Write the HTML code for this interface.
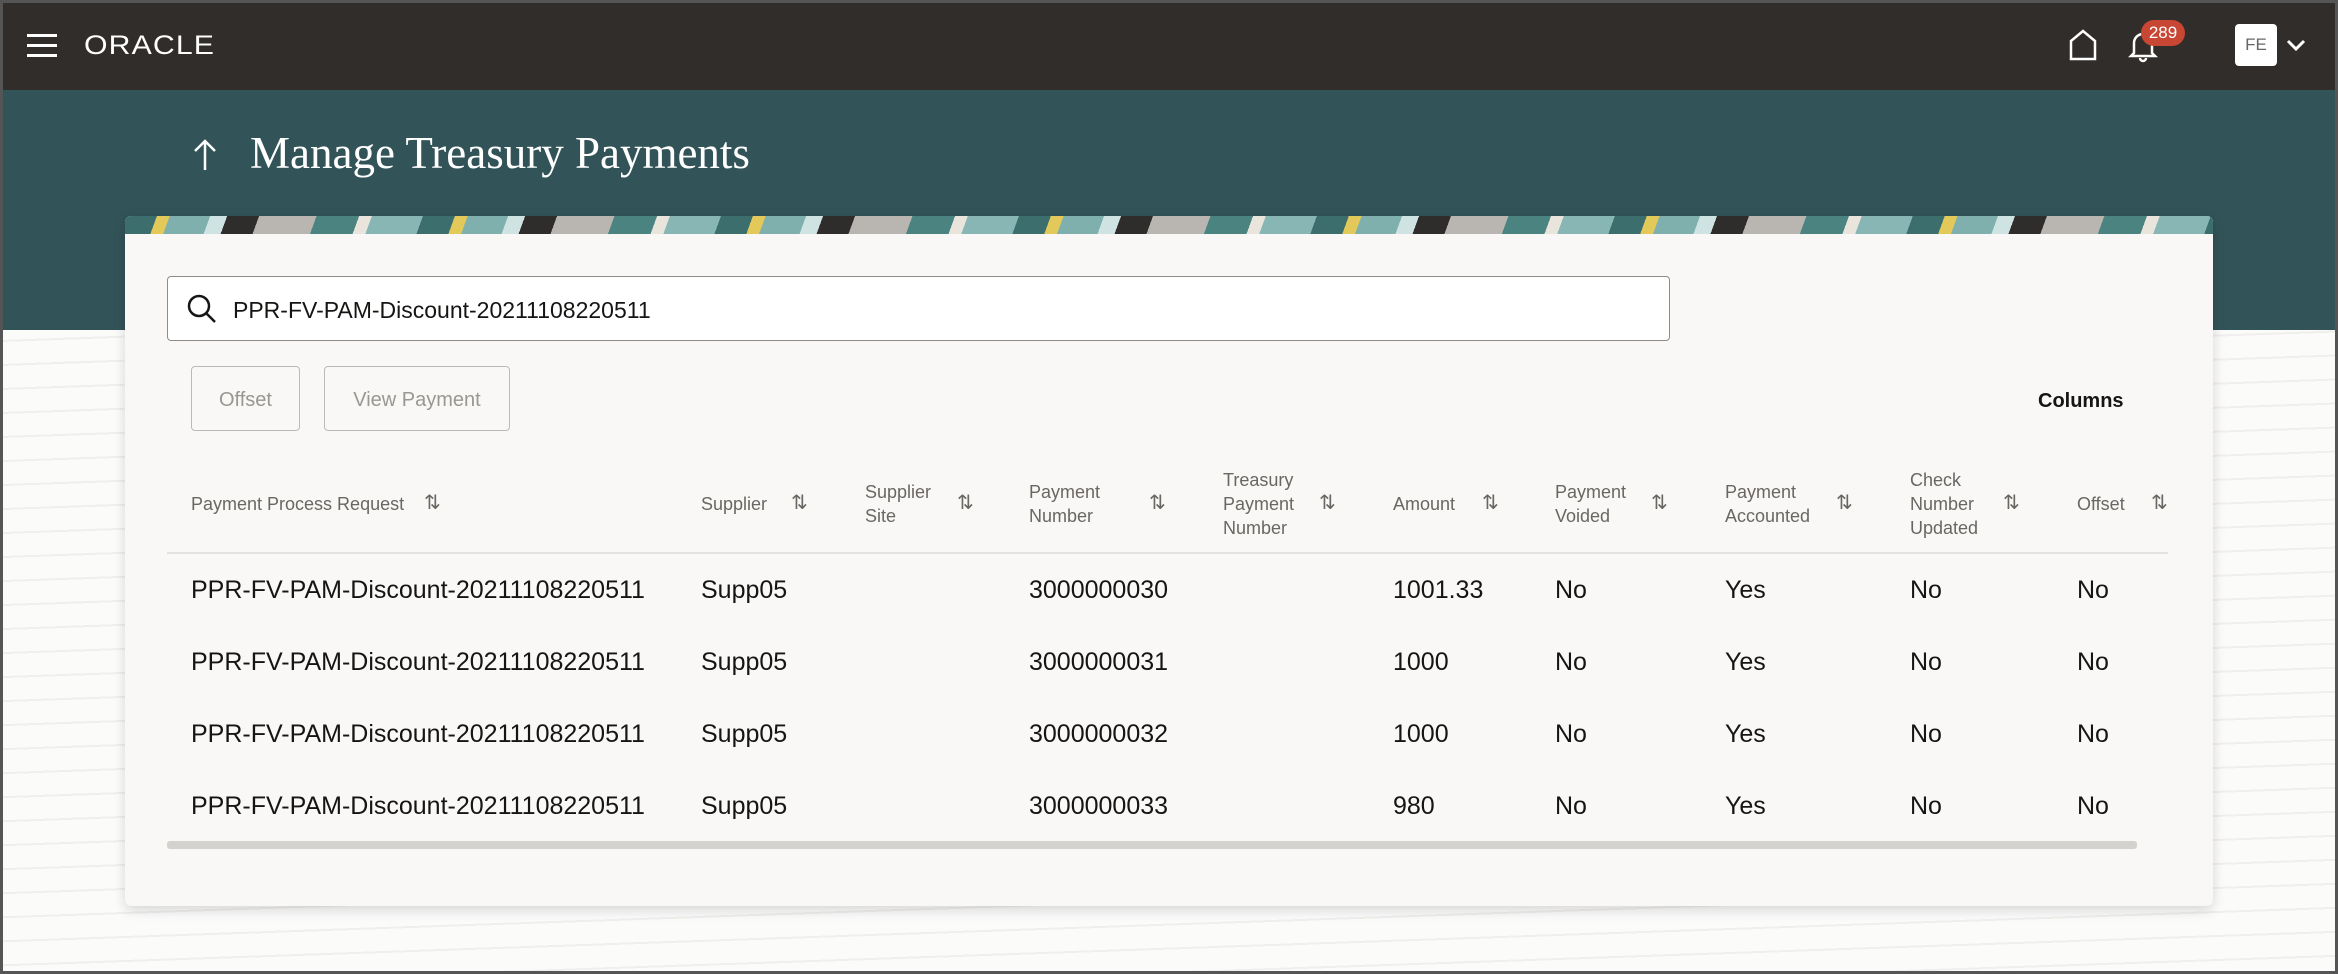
<!DOCTYPE html>
<html><head><meta charset="utf-8"><style>
*{margin:0;padding:0;box-sizing:border-box}
body{width:2338px;height:974px;overflow:hidden;position:relative;font-family:"Liberation Sans",sans-serif;background:#f7f6f4;}
.frame{position:absolute;left:0;top:0;width:2338px;height:974px;border:3px solid #555;z-index:9;pointer-events:none}
.wave{position:absolute;left:0;top:330px;width:2338px;height:644px;background:repeating-linear-gradient(178deg,#fbfbfa 0 10px,#f0efed 10px 12px,#fbfbfa 12px 24px);}
.hdr{position:absolute;left:0;top:0;width:2338px;height:90px;background:#312d2a}
.teal{position:absolute;left:0;top:90px;width:2338px;height:240px;background:#325358}
.card{position:absolute;left:125px;top:216px;width:2088px;height:690px;background:#f9f8f6;border-radius:6px;overflow:hidden;box-shadow:0 4px 12px rgba(0,0,0,.15)}
.banner{height:18px;background:repeating-linear-gradient(110deg,#3c6e6e 0 30px,#e3c95a 30px 42px,#7fb0ad 42px 80px,#cfe3e2 80px 96px,#2f2d2c 96px 126px,#b9b5b0 126px 180px,#4b8380 180px 220px,#e9e5dc 220px 232px,#88b6b4 232px 280px)}
.search{position:absolute;left:42px;top:60px;width:1503px;height:65px;background:#fff;border:1.5px solid #8f8c88;border-radius:4px}
.search span{position:absolute;left:65px;top:20px;font-size:23px;color:#161513}
.btn{position:absolute;top:150px;height:65px;border:1.5px solid #bdbab6;border-radius:4px;color:#9a9793;font-size:20px;text-align:center;line-height:66px}
.th{position:absolute;font-size:18px;color:#6a6763;line-height:24px}
.si{position:absolute;font-size:20px;color:#6a6763}
.td{position:absolute;font-size:25px;color:#161513}
</style></head><body>
<div class="frame"></div>
<div class="wave"></div>
<div class="hdr">
 <div style="position:absolute;left:27px;top:34px;width:30px;height:3px;background:#fff;box-shadow:0 10px 0 #fff,0 20px 0 #fff"></div>
 <div style="position:absolute;left:84px;top:30px;font-size:27px;color:#fff;letter-spacing:1px;transform:scaleX(1.12);transform-origin:left">ORACLE</div>
 <svg style="position:absolute;left:2068px;top:29px" width="30" height="32" viewBox="0 0 30 32"><path d="M3 30V12L15 2 27 12V30Z" fill="none" stroke="#fff" stroke-width="2.5"/></svg>
 <svg style="position:absolute;left:2128px;top:29px" width="30" height="34" viewBox="0 0 30 34"><path d="M6 24V14a9 9 0 0 1 18 0V24l3 3H3Z M12 29a3 3 0 0 0 6 0" fill="none" stroke="#fff" stroke-width="2.5"/></svg>
 <div style="position:absolute;left:2141px;top:20px;width:44px;height:26px;border-radius:13px;background:#c74634;color:#fff;font-size:17px;text-align:center;line-height:26px">289</div>
 <div style="position:absolute;left:2235px;top:24px;width:42px;height:42px;border-radius:4px;background:#fff;color:#6a6763;font-size:17px;text-align:center;line-height:42px">FE</div>
 <svg style="position:absolute;left:2286px;top:38px" width="20" height="14" viewBox="0 0 20 14"><path d="M2 3l8 8 8-8" fill="none" stroke="#fff" stroke-width="3"/></svg>
</div>
<div class="teal">
 <svg style="position:absolute;left:193px;top:48px" width="24" height="34" viewBox="0 0 24 34"><path d="M12 32V3M2 13L12 3l10 10" fill="none" stroke="#fff" stroke-width="2.5"/></svg>
 <div style="position:absolute;left:250px;top:37px;font-family:'Liberation Serif',serif;font-size:45px;color:#fff">Manage Treasury Payments</div>
</div>
<div class="card">
 <div class="banner"></div>
 <div class="search"><svg style="position:absolute;left:18px;top:16px" width="32" height="32" viewBox="0 0 32 32"><circle cx="13" cy="13" r="10" fill="none" stroke="#161513" stroke-width="2.5"/><path d="M20 20l9 9" stroke="#161513" stroke-width="2.5"/></svg><span>PPR-FV-PAM-Discount-20211108220511</span></div>
 <div class="btn" style="left:66px;width:109px">Offset</div>
 <div class="btn" style="left:199px;width:186px">View Payment</div>
 <div style="position:absolute;left:1913px;top:174px;font-size:20px;font-weight:bold;color:#161513">Columns</div>
 <div class="th" style="left:66px;top:276px">Payment Process Request</div>
 <div class="th" style="left:576px;top:276px">Supplier</div>
 <div class="th" style="left:740px;top:264px">Supplier<br>Site</div>
 <div class="th" style="left:904px;top:264px">Payment<br>Number</div>
 <div class="th" style="left:1098px;top:252px">Treasury<br>Payment<br>Number</div>
 <div class="th" style="left:1268px;top:276px">Amount</div>
 <div class="th" style="left:1430px;top:264px">Payment<br>Voided</div>
 <div class="th" style="left:1600px;top:264px">Payment<br>Accounted</div>
 <div class="th" style="left:1785px;top:252px">Check<br>Number<br>Updated</div>
 <div class="th" style="left:1952px;top:276px">Offset</div>
 <div class="si" style="left:299px;top:274px">⇅</div><div class="si" style="left:666px;top:274px">⇅</div><div class="si" style="left:832px;top:274px">⇅</div><div class="si" style="left:1024px;top:274px">⇅</div><div class="si" style="left:1194px;top:274px">⇅</div><div class="si" style="left:1357px;top:274px">⇅</div><div class="si" style="left:1526px;top:274px">⇅</div><div class="si" style="left:1711px;top:274px">⇅</div><div class="si" style="left:1878px;top:274px">⇅</div><div class="si" style="left:2026px;top:274px">⇅</div>
 <div style="position:absolute;left:42px;top:336px;width:2001px;height:2px;background:#e4e2df"></div>
 <div style="position:absolute;left:42px;top:625px;width:1970px;height:8px;background:#d4d2cf;border-radius:3px"></div>
 <div id="rows"></div>
</div>
<script>
var d=[["1001.33","3000000030"],["1000","3000000031"],["1000","3000000032"],["980","3000000033"]],h="";
d.forEach(function(r,i){var y=360+i*72;
h+='<div class="td" style="left:66px;top:'+y+'px">PPR-FV-PAM-Discount-20211108220511</div><div class="td" style="left:576px;top:'+y+'px">Supp05</div><div class="td" style="left:904px;top:'+y+'px">'+r[1]+'</div><div class="td" style="left:1268px;top:'+y+'px">'+r[0]+'</div><div class="td" style="left:1430px;top:'+y+'px">No</div><div class="td" style="left:1600px;top:'+y+'px">Yes</div><div class="td" style="left:1785px;top:'+y+'px">No</div><div class="td" style="left:1952px;top:'+y+'px">No</div>';});
document.getElementById('rows').outerHTML=h;
</script>
</body></html>
